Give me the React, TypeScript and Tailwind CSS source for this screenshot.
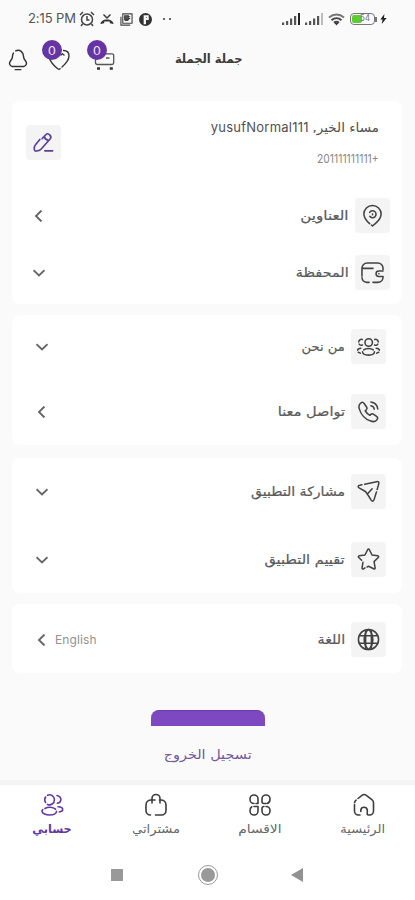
import type { ReactNode } from 'react';

type IconProps = { d: string[]; className?: string; width?: number };

function Line({ d, className = 'h-6 w-6', width = 1.5 }: IconProps) {
  return (
    <svg viewBox="0 0 24 24" className={className} fill="none" stroke="currentColor" strokeWidth={width} strokeLinecap="round" strokeLinejoin="round">
      {d.map((p) => <path key={p} d={p} />)}
    </svg>
  );
}

const pin = ['M9 20.500C5 17 3 13.500 3 10.500a9 9 0 0 1 18 0c0 3-2 6.500-5.500 9.500L12 23l-1-.9', 'M9 8.800a3.600 3.600 0 1 1 .2 4M12 10.500v.6'];
const wallet = ['M1 16V7.500a5.500 5.500 0 0 1 5.500-5.500h11A5.500 5.500 0 0 1 23 7.500V9M1 17.500a5.500 5.500 0 0 0 5 4.800h2.500M12.500 22.300H17.500a5.500 5.500 0 0 0 5.500-5.300', 'M1.500 7.700h11', 'M23 10.500h-4.500a2.800 2.800 0 0 0 0 5.600H23M18.500 13.300h.3'];
const group = ['M8.300 7.800a3.900 3.900 0 1 1 3.900 3.900A3.900 3.900 0 0 1 8.300 7.800', 'M5.500 4.600a2.800 2.800 0 0 0-3.700 2.700M2.300 9.500a2.800 2.800 0 0 0 3.400 1', 'M18.500 4.600a2.800 2.800 0 0 1 3.700 2.700M21.700 9.500a2.800 2.800 0 0 1-3.400 1', 'M7 15.500c2.500-2 7.500-2 10 0M18.200 17.500c0 2.200-2.700 3.500-6.200 3.500s-6.200-1.300-6.200-3.500', 'M4 13.800c-2 .2-3.400 1-3.400 2.200M1.300 18l2.200.9M20 13.800c2 .2 3.400 1 3.400 2.200M22.700 18l-2.200.9'];
const phone = ['M8.500 11.500 10 9.800c.8-1 .5-1.700-.2-2.700L7.400 3.600C6.600 2.500 5.500 2 4.500 2.800 2 4.300 1.600 6.500 2.300 9c1.500 5.500 6.200 11 12 13 2.500.9 5.200.8 6.800-1.800.8-1.200.4-2.300-.7-3.100l-3.300-2.300c-1-.7-1.900-.6-2.700.2l-1 1c-1.700-.8-3.300-2.300-4.300-4', 'M14.500 6c2 .3 3.200 1.600 3.500 3.500', 'M14.500 2.200c4 .5 6.600 3.200 7.200 7.200'];
const send = ['M8 4.500 20.500 1.700c1.900-.4 2.700.5 2.200 2.200L21 10M20.300 12.500l-2.500 8c-.6 1.900-2 2-3 .5l-4-6.400 5-5.400', 'M10.800 14.600 8.800 12 2.200 8.200C.7 7.200.9 5.800 2.800 5.500l2.400-.5'];
const star = ['M8.300 20.700 6.800 21.700c-1 .6-1.700.1-1.500-1L6.200 15M4.800 12.800 1.800 9.900c-.7-.8-.3-1.600.6-1.700l5.900-.9 2.800-5.500c.5-.9 1.300-.9 1.800 0l2.800 5.500 5.900.9c1 .2 1.300 1 .6 1.700l-4.400 4.300 1.100 6.500c.1 1.100-.5 1.600-1.500 1L12 19l-1.500.8'];
const globe = ['M12 1.500a10.500 10.500 0 1 0 0 21 10.500 10.500 0 0 0 0-21', 'M2.500 8h19M2.500 16h19', 'M12 1.500c-6 5-6 16 0 21M12 1.500c6 5 6 16 0 21', 'M9 2.500v19M15 2.500v19'];
const edit = ['m7.800 8.500-5 6C1.600 16 1.200 18 1.500 20c.2 1.500 1.200 2 2.500 1.700l3-.7c1-.3 1.700-.8 2.400-1.600L19.500 8c1.500-1.700 1.300-3-.2-4.500-1.800-1.800-3.200-2-4.700-.3L10.500 7.500M13 5.500c.5 2 2 3.500 4 3.800', 'M13.500 21.500H22.500'];
const home = ['M8 22H6.500a4 4 0 0 1-4-4v-6.500M2.600 9.500c.2-1 .7-1.700 1.500-2.300M6 5.500l4-3.200a3.500 3.500 0 0 1 4.300 0l5.600 4.400A4 4 0 0 1 21.500 10v8a4 4 0 0 1-4 4H16', 'M8.800 18.500v-1.500a3.300 3.300 0 0 1 6.500 0V21.500'];
const grid = ['M6 10.500a4 4 0 0 1-4-4V6a4 4 0 0 1 8 0v4.500H8M18 10.500h-2a2 2 0 0 1-2-2V6a4 4 0 0 1 8 0c0 2.500-.8 4-2.500 4.400', 'M6 13.500h4V18a4 4 0 0 1-8 0c0-2 .6-3.500 1.800-4.200M18 13.500a4 4 0 0 1 4 4v.5a4 4 0 0 1-8 0v-2.500a2 2 0 0 1 2-2'];
const bag = ['M6.500 22a4.500 4.500 0 0 1-4.500-4.500V12a5 5 0 0 1 4.500-5H11M15.500 7h2a5 5 0 0 1 4.500 5v5.500a4.500 4.500 0 0 1-4.500 4.500h-6', 'M8 10V5.500a4 4 0 0 1 8 0V10'];
const users = ['M5.600 9.500a5 5 0 0 1 0-5.500M7.500 2.200a5 5 0 1 1 0 9.200', 'M17 2.500c2.800.5 4.200 2.500 3.800 4.700-.3 1.800-1.600 3-3.500 3', 'M5 15.500c3-2 8-1.700 10.500.7M16.500 18.300c0 2.200-3 3.700-6.800 3.700S2 20.500 2 18.300c0-.6.3-1.200.8-1.700', 'M18 13.800c2.800 0 4.700 1.200 4.700 2.800 0 1.400-1.300 2.200-3.500 2.400'];
const bell = ['M9.500 2c1.700-.8 4.300-.7 6 .6 1.800 1.500 2.500 3.300 2.500 5.400 0 2 .5 3 1.900 4.500 2.200 2.600 1.600 5.700-1.700 6.500H5.800c-3.300-.8-3.900-3.900-1.700-6.500C5.500 11 6 10 6 8c0-1.400.3-2.500 1-3.500', 'M9 22.500h6'];

function Box({ children, tint = 'text-[#424242]' }: { children: ReactNode; tint?: string }) {
  return <div className={`flex h-[35px] w-[35px] shrink-0 items-center justify-center rounded bg-[#f4f4f5] ${tint}`}>{children}</div>;
}

function Chevron({ side, pad = 'ml-6' }: { side?: boolean; pad?: string }) {
  return (
    <svg viewBox="0 0 12 12" className={`h-3 w-3 shrink-0 ${pad}`} fill="none" stroke="#666" strokeWidth="1.9">
      <path d={side ? 'M8.500 .5 3 6l5.500 5.500' : 'M.5 3.200 6 8.500l5.500-5.300'} />
    </svg>
  );
}

type RowProps = { icon: string[]; label: string; size: string; side?: boolean; note?: string; pad?: string };

function Row({ icon, label, size, side, note, pad }: RowProps) {
  return (
    <div className="flex h-[35px] items-center">
      <Box><Line d={icon} className="h-[23px] w-[23px]" width={1.6} /></Box>
      <span className={`mr-1.5 origin-right text-[13px] whitespace-nowrap text-[#5a5a5a] [-webkit-text-stroke:0.2px_#5a5a5a] ${size}`}>{label}</span>
      <div className="mr-auto flex items-center">
        {note && <span className="ml-[7px] font-['Inter'] text-[12px] tracking-[0.1px] text-[#929292]">{note}</span>}
        <Chevron side={side} pad={pad} />
      </div>
    </div>
  );
}

function Badge() {
  return <span className="absolute -top-[6px] -left-[5px] flex h-5 w-5 items-center justify-center rounded-full bg-[#6536a3] text-[13px] leading-none text-[#eadcf8]">0</span>;
}

function Signal({ dim }: { dim?: boolean }) {
  return (
    <svg viewBox="0 0 18 12" className="h-3 w-[18px]" fill="#555">
      <path d="M0 9.500h2.200V12H0zM4 8h2.200v4H4zM8 5.500h2.200V12H8zM12 3h2.200v9H12z" />
      <path d="M16 0h2v12h-2z" fill={dim ? '#bbb' : '#222'} />
    </svg>
  );
}

function Status() {
  return (
    <div dir="ltr" className="flex h-[38px] items-center pl-[28px] text-[#555]">
      <span className="w-[51px] font-['Inter'] text-[13px] tracking-[-0.1px] whitespace-nowrap">2:15 PM</span>
      <svg viewBox="0 0 16 16" className="h-4 w-4" fill="none" stroke="#444" strokeWidth="1.5">
        <circle cx="8" cy="8.500" r="5.500" /><path d="M8 5v4h2.500M1 4l3-3M15 4l-3-3M3.500 13 2 15M12.500 13l1.500 2" />
      </svg>
      <svg viewBox="0 0 14 12" className="ml-[5px] h-3 w-3.5" fill="none" stroke="#333" strokeWidth="1.400">
        <path d="m3.500 1.500 3.500 3.500 3.500-3.500" /><path d="M.5 11c0-2.500 3-4.500 6.500-4.500s6.500 2 6.500 4.500l-3.700-.8V8.500H4.200v1.700z" fill="#333" stroke="none" />
      </svg>
      <svg viewBox="0 0 14 14" className="ml-[6px] h-[13px] w-[13px]" fill="none" stroke="#444" strokeWidth="1.200">
        <path d="M3 1h10v10H3zM1 4v9h10M5 4h6M5 6h6M5 8h4" /><path d="M5 3h4v4H5z" fill="#555" />
      </svg>
      <svg viewBox="0 0 14 14" className="ml-[6px] h-[13px] w-[13px]">
        <circle cx="7" cy="7" r="7" fill="#333" /><path d="M5 2.500h5.500v5H7.500V12H5z" fill="#fafafa" /><path d="M7.500 4.500h1v1h-1z" fill="#333" />
      </svg>
      <span className="ml-[11px] flex gap-[4px]"><i className="h-[2px] w-[2px] bg-[#666]" /><i className="h-[2px] w-[2px] bg-[#666]" /></span>
      <span className="mr-[28px] ml-auto flex items-center gap-[5px]">
        <Signal /><Signal dim />
        <svg viewBox="0 0 17 13" className="h-[13px] w-[17px]" fill="none" stroke="#444" strokeWidth="1.900">
          <path d="M1 4.500c4.500-4 10.500-4 15 0" stroke="#777" /><path d="M3.500 7.200c3-2.700 7-2.700 10 0M6 9.800c1.600-1.400 3.400-1.400 5 0" /><path d="m6.500 10 2 2.500 2-2.500z" fill="#333" stroke="none" />
        </svg>
        <span className="flex items-center">
          <span className="relative flex h-3 w-[25px] items-center rounded-[4px] border-[1.500px] border-[#777] p-px">
            <i className="h-[8px] w-[10px] shrink-0 rounded-[2px] bg-[#5dcb32]" /><b className="-ml-[2px] text-[8px] leading-none font-normal text-[#777]">54</b>
          </span>
          <i className="h-[5px] w-[2px] bg-[#777]" />
          <svg viewBox="0 0 7 11" className="ml-[3px] h-[10px] w-[7px]" fill="#222"><path d="M4.500 0 0 6h2.500l-1 5L7 4.500H4z" /></svg>
        </span>
      </span>
    </div>
  );
}

function Header() {
  return (
    <div dir="ltr" className="relative flex h-[42px] items-start pt-[8px] pl-[7px] text-[#333]">
      <Line d={bell} className="mt-[3px] h-[22px] w-[22px]" width={1.6} />
      <div className="relative ml-[18px] h-6 w-6">
        <svg viewBox="0 0 24 24" className="h-6 w-6" fill="none" stroke="currentColor" strokeWidth="1.400" strokeLinecap="round"><path d="M2.500 12.500c1.300 3.700 4.500 7.300 8.300 10.300q1.200.9 2.300 0M15 21c3.500-3 7-6.500 7-11.200 0-3.300-2.300-5.300-5.500-5.300M14 9l1.500-1.200 1.500 1.200" /></svg>
        <Badge />
      </div>
      <div className="relative ml-[21px] h-6 w-6">
        <svg viewBox="0 0 24 24" className="h-6 w-6" fill="none" stroke="currentColor" strokeWidth="1.300"><path d="M3.500 11v5.500a2 2 0 0 0 2 2H20a1.700 1.700 0 0 0 1.700-1.700V9.500A1.700 1.700 0 0 0 20 7.800h-7M14 12h3.500" stroke="#555" /><path d="M5 22.500h3M17.800 22.500h3" strokeWidth="2.600" /></svg>
        <Badge />
      </div>
      <h1 dir="rtl" className="absolute top-[12px] right-[173px] origin-right scale-x-[0.92] text-[12.500px] leading-[18px] font-bold whitespace-nowrap text-[#3b3b3b]">جملة الجملة</h1>
    </div>
  );
}

function Tab({ icon, label, active, size }: { icon: string[]; label: string; active?: boolean; size: string }) {
  return (
    <div className={`flex w-[104px] flex-col items-center ${active ? 'font-bold text-[#6438a2]' : 'text-[#666]'}`}>
      <Line d={icon} className={`ml-px h-6 w-6 ${active ? '' : 'text-[#3d3d3d]'}`} width={1.6} />
      <span className={`mt-[2px] text-[12px] leading-[20px] whitespace-nowrap ${size}`}>{label}</span>
    </div>
  );
}

export default function App() {
  return (
    <div dir="rtl" className="flex h-[900px] w-[415px] flex-col overflow-hidden bg-[#fafafa] font-['DejaVu_Sans',sans-serif]">
      <Status />
      <Header />
      <main className="mx-3 mt-[21px] flex w-[390px] flex-col self-end">
        <section className="h-[203px] rounded-lg bg-white pr-3">
          <div className="flex h-[97px] items-start justify-between pr-[11px] pl-[14px]">
            <div className="pt-[16px]">
              <p className="text-[13px] leading-5 whitespace-nowrap text-[#505050]"><span className="inline-block origin-right scale-x-[1.04]">مساء الخير,</span> <span className="mr-[2px] font-['Inter'] tracking-[0.25px]">yusufNormal111</span></p>
              <p dir="ltr" className="mt-[11px] ml-auto w-fit origin-right scale-x-[0.86] font-['Inter'] text-[12px] leading-5 text-[#888]">201111111111+</p>
            </div>
            <div className="mt-6"><Box tint="text-[#59409b]"><Line d={edit} className="h-[21px] w-[21px]" width={1.9} /></Box></div>
          </div>
          <div className="flex flex-col gap-[22px]">
            <Row icon={pin} label="العناوين" size="scale-x-[1.16]" side pad="ml-[21px]" />
            <Row icon={wallet} label="المحفظة" size="scale-x-[1.11]" pad="ml-[21px]" />
          </div>
        </section>
        <section className="mt-[11px] flex h-[130px] flex-col gap-[30px] rounded-lg bg-white pt-[14px] pr-[16px]">
          <Row icon={group} label="من نحن" size="scale-x-[1.01]" />
          <Row icon={phone} label="تواصل معنا" size="scale-x-[1.12]" side />
        </section>
        <section className="mt-[13px] flex h-[135px] flex-col gap-[33px] rounded-lg bg-white pt-[16px] pr-[16px]">
          <Row icon={send} label="مشاركة التطبيق" size="scale-x-[1.08]" />
          <Row icon={star} label="تقييم التطبيق" size="scale-x-[1.12]" />
        </section>
        <section className="mt-[11px] h-[69px] rounded-lg bg-white pt-[18px] pr-[16px]">
          <Row icon={globe} label="اللغة" size="scale-x-[1.1]" side note="English" />
        </section>
      </main>
      <div className="mt-[37px] flex w-[415px] flex-col items-center">
        <div className="h-[16px] w-[114px] rounded-t-[8px] border-t border-[#6b3cab] bg-[#7e48c0]" />
        <button className="mt-[19px] scale-x-[1.11] text-[13px] leading-5 whitespace-nowrap text-[#75569f]">تسجيل الخروج</button>
      </div>
      <footer className="mt-auto h-[120px] border-t-[5px] border-[#f4f4f4] bg-white">
        <nav className="flex h-[68px] justify-center pt-[8px]">
          <Tab icon={home} label="الرئيسية" size="scale-x-[1.08]" />
          <Tab icon={grid} label="الاقسام" size="scale-x-[1.15]" />
          <Tab icon={bag} label="مشتراتي" size="scale-x-[1.09]" />
          <Tab icon={users} label="حسابي" size="scale-x-[0.94]" active />
        </nav>
        <div dir="ltr" className="flex h-[44px] items-center pl-[111px]">
          <i className="h-3 w-3 bg-[#999]" />
          <i className="ml-[75px] flex h-5 w-5 items-center justify-center rounded-full border border-[#999]"><i className="h-[14px] w-[14px] rounded-full bg-[#999]" /></i>
          <svg viewBox="0 0 12 14" className="ml-[73px] h-[14px] w-3" fill="#929292"><path d="M0 7 12 0v14z" /></svg>
        </div>
      </footer>
    </div>
  );
}
